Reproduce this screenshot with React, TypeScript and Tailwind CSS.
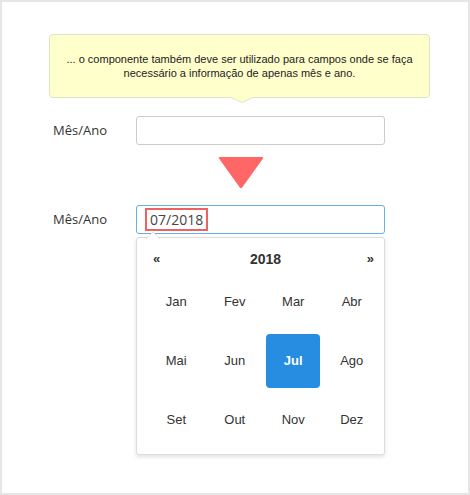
const months = [
  'Jan', 'Fev', 'Mar', 'Abr',
  'Mai', 'Jun', 'Jul', 'Ago',
  'Set', 'Out', 'Nov', 'Dez',
]

export default function App() {
  const selected = 'Jul'

  return (
    <div className="w-[470px] h-[495px] bg-white border-2 border-[#e6e6e6] overflow-hidden">
      {/* Tooltip */}
      <div className="relative ml-[47px] mt-[32px] w-[381px] h-[64px] bg-[#ffffcc] border border-[#e2e2c8] rounded-[4px] flex flex-col items-center justify-center font-['Liberation_Sans',Arial,sans-serif] text-[11px] leading-[14px] text-[#222]">
        <p>... o componente também deve ser utilizado para campos onde se faça</p>
        <p>necessário a informação de apenas mês e ano.</p>
        <svg className="absolute left-[180px] -bottom-[6px]" width="24" height="6" viewBox="0 0 24 6">
          <path d="M0 0 L12 5.5 L24 0 Z" fill="#ffffcc" />
          <path d="M0 0 L12 5.5 L24 0" fill="none" stroke="#e2e2c8" strokeWidth="1" />
        </svg>
      </div>

      {/* Empty field */}
      <div className="flex items-center mt-[18px] font-['Open_Sans',sans-serif] text-[13px] text-[#333]">
        <span className="w-[134px] pl-[51px]">Mês/Ano</span>
        <div className="w-[249px] h-[29px] border border-[#cccccc] rounded-[3px] bg-white" />
      </div>

      {/* Arrow */}
      <div className="flex justify-center mt-[12px] pl-[12px]">
        <svg width="46" height="32" viewBox="0 0 46 32">
          <path d="M2 0 H44 Q46 0 45 1.6 L24.2 30.6 Q23 32 21.8 30.6 L1 1.6 Q0 0 2 0 Z" fill="#ff6666" />
        </svg>
      </div>

      {/* Filled field */}
      <div className="flex items-center mt-[16px] font-['Open_Sans',sans-serif] text-[13px] text-[#333]">
        <span className="w-[134px] pl-[51px]">Mês/Ano</span>
        <div className="w-[249px] h-[29px] border border-[#66afe9] rounded-[3px] bg-white flex items-center pl-[8px]">
          <span className="border-2 border-[#f06262] h-[23px] px-[3px] flex items-center text-[14px] text-[#444]">
            07/2018
          </span>
        </div>
      </div>

      {/* Month picker */}
      <div className="relative ml-[134px] mt-[3px] w-[249px] bg-white border border-[#dddddd] rounded-[3px] shadow-[0_2px_4px_rgba(0,0,0,0.12)] font-['Liberation_Sans',Arial,sans-serif] text-[#333]">
        <svg className="absolute left-[9px] -top-[6px]" width="14" height="7" viewBox="0 0 14 7">
          <path d="M0 7 L7 0 L14 7 Z" fill="#ffffff" />
          <path d="M0 7 L7 0 L14 7" fill="none" stroke="#e2e2e2" strokeWidth="1" />
        </svg>
        <div className="flex items-center justify-between h-[20px] mt-[11px] pl-[16px] pr-[10px]">
          <span className="text-[13px] font-bold">«</span>
          <span className="text-[14px] font-bold pl-[4px]">2018</span>
          <span className="text-[13px] font-bold">»</span>
        </div>
        <div className="grid grid-cols-[repeat(4,58.5px)] pl-[10px] mt-[3px] pb-[5px]">
          {months.map((m) => (
            <div key={m} className="h-[59px] flex items-center justify-center">
              <div
                className={
                  m === selected
                    ? 'w-[54px] h-[54px] rounded-[4px] bg-[#268de0] text-white font-bold text-[13px] flex items-center justify-center'
                    : 'w-[54px] h-[54px] text-[13px] flex items-center justify-center'
                }
              >
                {m}
              </div>
            </div>
          ))}
        </div>
      </div>
    </div>
  )
}
